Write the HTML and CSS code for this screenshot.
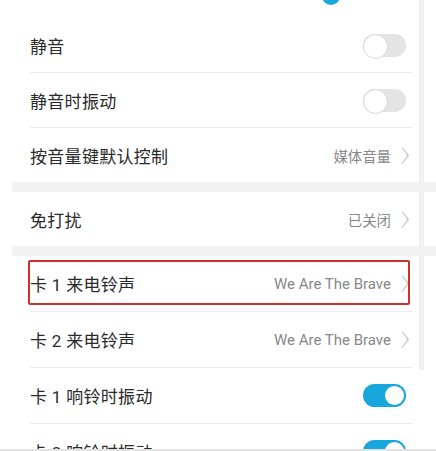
FILE: index.html
```html
<!DOCTYPE html>
<html lang="zh-CN">
<head>
  <meta charset="UTF-8" />
  <meta name="viewport" content="width=device-width, initial-scale=1.0" />
  <title>声音设置</title>
  <link rel="stylesheet" href="styles.css">
</head>
<body>
  <div class="screen">
    <div class="section">
      <div class="slider-stub"><span class="thumb"></span></div>
      <div class="row">
        <span class="title">静音</span>
        <span class="switch"></span>
      </div>
      <div class="row">
        <span class="title">静音时振动</span>
        <span class="switch"></span>
      </div>
      <div class="row">
        <span class="title">按音量键默认控制</span>
        <span class="value">媒体音量<i class="chevron"></i></span>
      </div>
    </div>

    <div class="gap"></div>

    <div class="section">
      <div class="row">
        <span class="title">免打扰</span>
        <span class="value">已关闭<i class="chevron"></i></span>
      </div>
    </div>

    <div class="gap"></div>

    <div class="section tall">
      <div class="row">
        <span class="title">卡 1 来电铃声</span>
        <span class="value latin">We Are The Brave<i class="chevron"></i></span>
      </div>
      <div class="row">
        <span class="title">卡 2 来电铃声</span>
        <span class="value latin">We Are The Brave<i class="chevron"></i></span>
      </div>
      <div class="row">
        <span class="title">卡 1 响铃时振动</span>
        <span class="switch on"></span>
      </div>
      <div class="row">
        <span class="title">卡 2 响铃时振动</span>
        <span class="switch on"></span>
      </div>
    </div>
  </div>

  <div class="scroll-track"></div>
  <div class="highlight"></div>
  <div class="bottom-edge"></div>
</body>
</html>
```

FILE: styles.css
```css
* {
  box-sizing: border-box;
}

body {
  margin: 0;
  width: 436px;
  height: 451px;
  overflow: hidden;
  position: relative;
  background: #fff;
  font-family: Roboto, "Noto Sans CJK SC", sans-serif;
  color: #2a2a2a;
}

.screen {
  margin-left: 12px;
}

.slider-stub {
  height: 18px;
}

.thumb {
  display: block;
  width: 18px;
  height: 18px;
  border-radius: 50%;
  background: #17a7dc;
  margin-left: 310px;
  transform: translateY(-13px);
}

.row {
  display: flex;
  align-items: center;
  justify-content: space-between;
  height: 55px;
  margin: 0 23px 0 18px;
  padding-right: 4px;
  border-bottom: 1px solid #ececec;
}

.section .row:last-child {
  border-bottom: none;
  height: 54px;
}

.tall .row {
  height: 56px;
}

.title {
  font-size: 17px;
  letter-spacing: 0.3px;
}

.value {
  display: flex;
  align-items: center;
  font-size: 14.4px;
  color: #888;
}

.value.latin {
  font-size: 15px;
}

.chevron {
  display: block;
  width: 9px;
  height: 9px;
  margin-left: 7px;
  margin-right: 2px;
  border-top: 1px solid #c2c2c2;
  border-right: 1px solid #c2c2c2;
  transform: scaleY(1.35) rotate(45deg);
}

.gap {
  height: 10px;
  background: #f2f2f2;
}

.switch {
  position: relative;
  width: 43px;
  height: 23px;
  margin-right: 3px;
  border-radius: 12px;
  background: #e4e4e4;
}

.switch::after {
  content: "";
  position: absolute;
  left: 0;
  top: 0;
  width: 23px;
  height: 23px;
  border-radius: 50%;
  background: #fff;
  border: 1px solid #d6d6d6;
}

.switch.on {
  background: #17a7dc;
}

.switch.on::after {
  left: auto;
  right: 2px;
  top: 2px;
  width: 19px;
  height: 19px;
  border: none;
}

.scroll-track {
  position: absolute;
  left: 419px;
  top: 0;
  width: 5px;
  height: 370px;
  background: #f1f1f1;
}

.highlight {
  position: absolute;
  left: 28px;
  top: 260px;
  width: 382px;
  height: 45px;
  border: 2px solid #d22f2b;
  border-radius: 2px;
}

.bottom-edge {
  position: absolute;
  left: 0;
  bottom: 0;
  width: 100%;
  height: 2px;
  background: #e2e2e2;
}
```
